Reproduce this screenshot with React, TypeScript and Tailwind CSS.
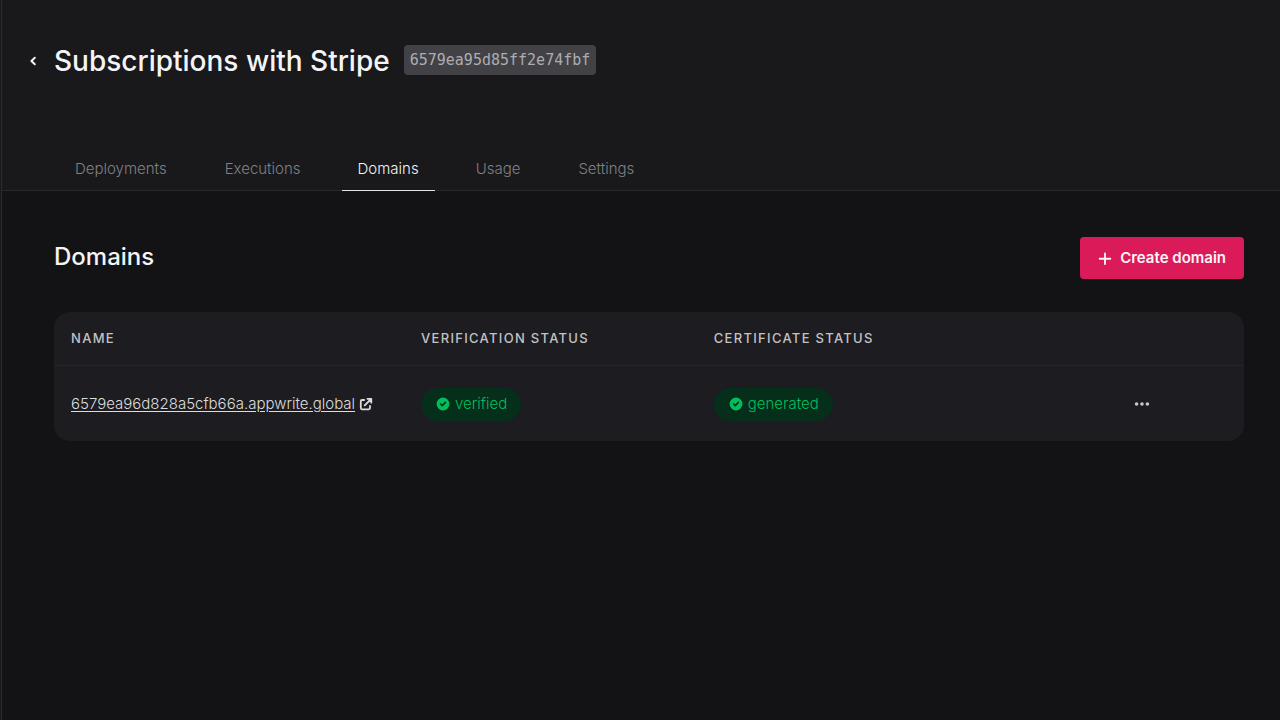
import { HiCheckCircle, HiDotsHorizontal } from "react-icons/hi";

const tabs = ["Deployments", "Executions", "Domains", "Usage", "Settings"];

function ChevronLeftIcon() {
  return (
    <svg viewBox="0 0 8 12" className="h-3 w-2" fill="none" stroke="currentColor" strokeWidth="2" strokeLinecap="round" strokeLinejoin="round" aria-hidden="true">
      <path d="M5.8 2.8 2.4 6l3.4 3.2" />
    </svg>
  );
}

function PlusIcon() {
  return (
    <svg viewBox="0 0 14 14" className="size-3.5" fill="none" stroke="currentColor" strokeWidth="1.9" strokeLinecap="round" aria-hidden="true">
      <path d="M7 2.4v10.6M1.7 7.7h10.6" />
    </svg>
  );
}

function ExternalLinkIcon() {
  return (
    <svg viewBox="0 0 14 14" className="size-3.5" fill="none" stroke="currentColor" strokeWidth="1.8" strokeLinecap="round" strokeLinejoin="round" aria-hidden="true">
      <path d="M5.2 3H3a1.2 1.2 0 0 0-1.2 1.2v6.9A1.2 1.2 0 0 0 3 12.3h6.8a1.2 1.2 0 0 0 1.2-1.2V9" />
      <path d="M8.4 1.8h3.9v3.9M12.1 2 5.7 8.4" />
    </svg>
  );
}

function StatusPill({ label }: { label: string }) {
  return (
    <span className="inline-flex h-[33px] items-center gap-1 rounded-full bg-[#052e1b] px-3.5 font-[350] text-[#00be5c]">
      <HiCheckCircle className="size-4" aria-hidden="true" />
      {label}
    </span>
  );
}

export default function App() {
  return (
    <div className="min-h-screen bg-[#19191b] pl-px font-['Inter',sans-serif]">
      <div className="flex min-h-screen flex-col border-l border-[#2b2b2e] bg-[#131315]">
        <header className="border-b border-[#28282b] bg-[#19191b] pt-10">
          <div className="flex h-10 items-center pl-[27px]">
            <a href="#functions" aria-label="Back" className="flex w-[25px] pt-0.5 text-[#f4f4f6]">
              <ChevronLeftIcon />
            </a>
            <h1 className="pt-0.5 text-[28px] leading-10 font-medium text-[#f4f4f6]">Subscriptions with Stripe</h1>
            <span className="ml-3.5 flex h-[30px] items-center rounded bg-[#414146] px-1.5 pt-px font-['DejaVu_Sans_Mono',monospace] text-[15px] text-[#adadb1]">
              6579ea95d85ff2e74fbf
            </span>
          </div>
          <nav className="mt-[66px] -mb-px flex gap-6 pl-14 text-[15px] font-[350]">
            {tabs.map((tab) => (
              <a
                key={tab}
                href={"#" + tab.toLowerCase()}
                aria-current={tab === "Domains" ? "page" : undefined}
                className={
                  tab === "Domains"
                    ? "h-[45px] border-b border-[#e4e4e7] px-4 leading-[45px] text-[#f4f4f6]"
                    : "h-[45px] px-[17px] leading-[45px] text-[#808085]"
                }
              >
                {tab}
              </a>
            ))}
          </nav>
        </header>
        <main className="pr-9 pl-[52px] pt-[46px]">
          <div className="flex items-start justify-between">
            <h2 className="text-2xl leading-10 font-medium text-[#f4f4f6]">Domains</h2>
            <button type="button" className="flex h-[42px] items-center gap-2 rounded bg-[#db1a5a] px-[18px] text-[15px] font-semibold text-[#fbf3f6]">
              <PlusIcon />
              Create domain
            </button>
          </div>
          <div className="mt-[33px] overflow-hidden rounded-2xl bg-[#1d1c20]">
            <table className="w-full table-fixed text-left text-[15px]">
              <thead>
                <tr className="h-[53px] border-b border-[#252528] text-[13px] tracking-[0.1em] text-[#c3c3c6] uppercase">
                  <th scope="col" className="w-[29.5%] pl-[17px] font-medium">Name</th>
                  <th scope="col" className="w-[24.6%] pl-4 font-medium">Verification Status</th>
                  <th scope="col" className="w-[35.4%] pl-4 font-medium">Certificate Status</th>
                  <th scope="col" aria-label="Actions" />
                </tr>
              </thead>
              <tbody>
                <tr className="h-[76px]">
                  <td className="pt-0.5 pl-[17px]">
                    <a href="#domain" className="flex items-center gap-1 font-[350] text-[#dcdcdf]">
                      <span className="underline underline-offset-2">6579ea96d828a5cfb66a.appwrite.global</span>
                      <ExternalLinkIcon />
                    </a>
                  </td>
                  <td className="pt-0.5 pl-4"><StatusPill label="verified" /></td>
                  <td className="pt-0.5 pl-4"><StatusPill label="generated" /></td>
                  <td className="pt-0.5 pl-3.5">
                    <button type="button" aria-label="Domain options" className="flex text-[#c9c9cc]">
                      <HiDotsHorizontal className="size-[18px]" />
                    </button>
                  </td>
                </tr>
              </tbody>
            </table>
          </div>
        </main>
      </div>
    </div>
  );
}
